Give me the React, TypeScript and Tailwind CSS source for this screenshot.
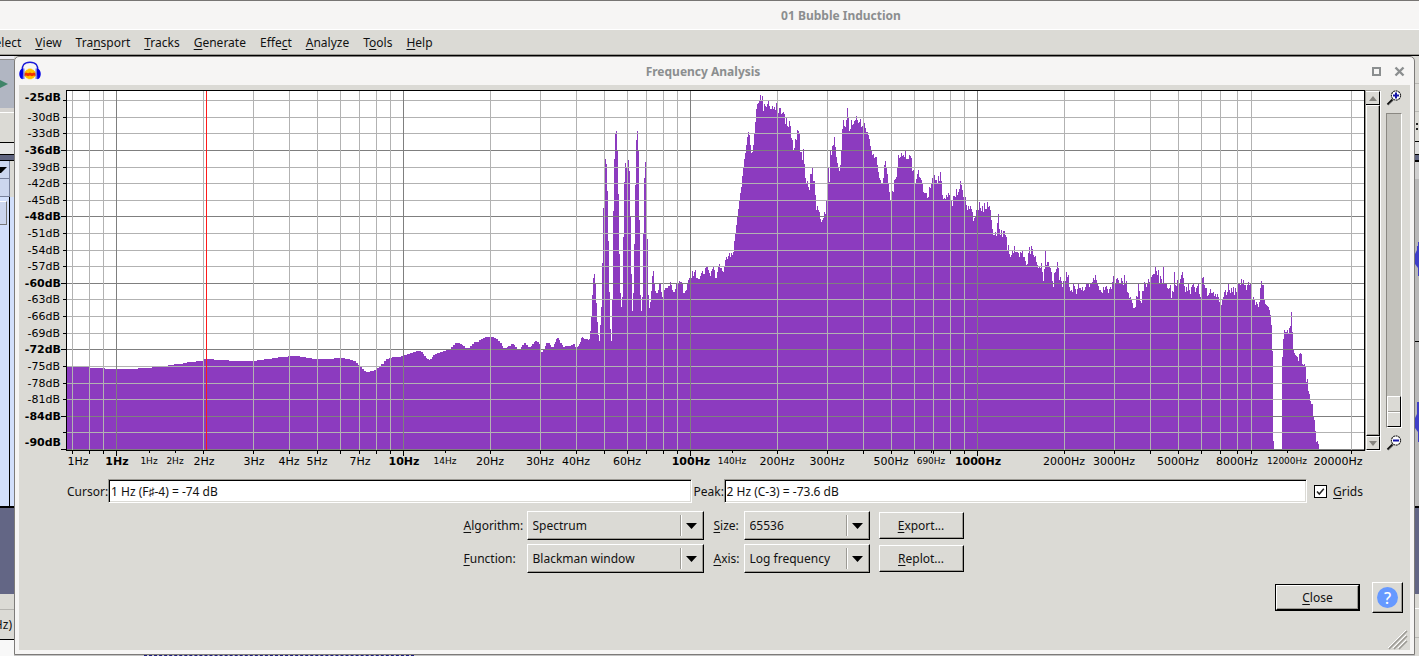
import React from "react";

type AxisLabel = { x: number; text: string; kind: "major" | "minor" | "small" };

const PLOT = { left: 66, top: 90, right: 1364, bottom: 450 };

const SPECTRUM = `67 367 89 368 105 369 138 368 152 367 160 366 168 365 174 364 183 363 187 362 196 361 204 359 214 360 229 361 257 360 264 359 272 358 278 357 288 356 300 357 306 358 312 359 334 358 345 359 350 360 353 361 356 363 358 365 360 367 362 369 364 371 366 372 370 371 374 370 377 368 379 366 381 364 384 361 386 359 389 358 392 357 401 356 404 355 407 354 410 353 413 352 416 351 421 352 423 354 424 356 426 358 427 359 429 360 430 359 432 357 433 355 435 354 437 353 440 352 443 351 446 350 448 349 451 347 453 345 455 343 460 344 462 345 463 346 465 348 470 346 472 344 474 342 479 340 481 339 483 338 485 337 494 338 496 339 498 341 500 343 502 346 503 348 507 347 508 346 511 344 514 345 515 347 517 349 521 347 522 345 524 343 526 345 528 347 531 346 532 344 534 342 535 341 537 342 539 344 540 348 541 352 543 350 545 346 546 343 550 345 551 347 554 344 555 342 556 339 557 338 559 340 560 343 562 345 563 347 565 346 571 345 573 344 575 347 577 347 578 346 579 344 580 342 581 338 582 337 583 338 584 339 588 340 589 339 590 331 591 317 592 295 593 278 594 274 595 283 596 303 597 322 598 335 599 341 600 325 601 307 602 263 603 208 605 159 606 164 607 191 608 241 609 292 610 329 611 341 612 299 613 211 614 159 615 134 616 131 617 150 618 194 619 254 620 293 621 307 622 297 623 237 624 182 625 163 626 168 628 160 629 171 630 217 631 274 632 311 633 293 634 244 635 185 636 140 637 131 638 150 639 220 640 295 641 311 642 297 643 234 644 178 645 162 647 239 648 295 649 308 650 302 651 291 652 276 653 271 654 283 655 291 656 293 658 290 659 284 661 292 662 297 664 290 665 288 668 286 670 282 671 285 672 290 673 292 675 289 676 283 679 281 680 282 682 283 683 293 685 291 686 290 687 283 688 280 689 278 692 271 693 276 694 272 695 270 696 278 698 279 700 276 701 273 702 271 703 274 705 268 706 266 708 270 709 273 710 276 711 271 712 269 713 266 714 270 715 278 717 272 718 267 719 264 720 268 722 271 723 272 724 267 725 260 726 257 727 259 728 256 729 253 730 257 731 253 732 255 733 252 734 241 735 233 736 225 737 217 738 209 739 201 740 193 741 187 742 176 743 168 744 159 745 153 746 145 747 137 748 132 749 135 750 145 751 153 752 152 753 145 754 134 755 122 756 109 757 104 758 103 759 101 760 95 761 101 762 96 763 111 764 104 765 106 766 107 767 104 768 101 769 106 770 109 772 106 773 109 774 107 775 110 776 103 778 113 779 108 781 114 782 113 783 112 784 114 785 124 786 118 787 126 788 127 789 121 790 126 791 138 792 140 793 150 794 148 795 139 796 140 797 130 798 131 799 134 800 152 802 160 803 149 804 164 805 178 806 184 807 181 808 187 809 190 810 174 812 168 813 181 815 195 816 210 817 206 818 210 819 212 820 219 821 222 822 220 823 218 824 212 825 214 826 201 827 180 828 168 829 182 830 151 831 155 832 146 833 145 834 137 835 147 836 157 837 163 838 168 839 171 840 165 841 151 842 129 843 120 844 126 845 127 846 120 847 108 848 118 849 131 850 129 851 120 852 125 853 124 854 121 855 120 856 116 857 120 858 123 859 122 860 119 861 127 862 126 864 123 865 128 866 132 868 135 869 139 870 146 871 151 872 155 873 154 874 158 875 157 877 165 878 172 879 178 880 180 881 183 883 178 884 165 885 161 886 168 887 174 888 184 889 192 890 200 891 195 892 191 893 192 894 180 895 179 896 177 897 168 898 155 899 158 900 157 901 153 902 156 903 155 904 157 905 151 906 159 909 155 910 156 911 158 912 171 913 170 914 183 916 179 917 174 918 170 919 177 920 178 921 180 922 184 923 192 924 193 927 198 928 197 929 187 930 188 931 184 932 178 934 175 935 180 937 183 938 176 939 181 940 172 941 181 942 195 943 199 944 198 945 199 946 195 947 197 948 193 949 195 950 200 952 206 953 196 955 197 956 189 957 195 958 192 959 189 960 181 961 185 962 190 963 197 966 205 967 210 968 206 969 209 970 206 971 209 972 212 973 221 974 218 975 217 976 210 979 202 980 208 981 211 982 206 983 212 984 203 985 209 987 202 988 207 989 206 990 210 991 220 992 229 993 235 995 232 996 236 997 223 998 214 999 229 1000 235 1001 230 1002 237 1003 231 1005 235 1006 237 1007 250 1008 245 1009 254 1010 257 1011 255 1012 251 1013 253 1014 246 1015 252 1018 253 1019 257 1020 252 1021 253 1022 251 1023 257 1025 261 1026 265 1027 264 1028 253 1029 247 1030 254 1031 246 1032 249 1033 255 1034 257 1035 256 1036 262 1037 265 1038 268 1039 267 1040 268 1041 263 1042 272 1043 281 1044 269 1045 251 1046 265 1047 262 1049 266 1050 268 1051 272 1052 281 1053 287 1054 273 1055 272 1056 269 1057 262 1058 268 1059 280 1060 277 1061 281 1062 287 1063 281 1066 272 1067 277 1068 275 1069 287 1070 291 1071 290 1072 292 1073 283 1074 286 1075 289 1076 294 1077 289 1078 283 1079 288 1081 290 1082 287 1083 291 1084 290 1085 287 1086 283 1089 287 1090 283 1092 282 1093 278 1094 280 1095 275 1096 280 1097 284 1098 286 1099 290 1101 292 1102 293 1103 287 1104 290 1105 287 1106 286 1107 289 1108 293 1109 289 1110 287 1111 289 1112 282 1113 276 1114 283 1116 279 1117 278 1118 280 1119 283 1121 278 1122 281 1123 285 1124 275 1125 283 1126 281 1127 292 1128 293 1129 298 1130 297 1131 299 1132 303 1133 308 1135 307 1136 296 1137 297 1138 284 1139 291 1140 301 1141 303 1142 291 1144 282 1145 284 1146 287 1147 283 1148 279 1149 282 1151 277 1152 275 1153 274 1155 267 1156 271 1157 275 1158 270 1159 283 1160 276 1161 279 1162 283 1163 267 1164 283 1167 288 1168 289 1169 288 1170 285 1171 298 1172 291 1173 292 1174 272 1175 285 1176 286 1177 280 1178 283 1180 279 1181 275 1182 272 1183 278 1184 286 1185 292 1186 287 1187 291 1188 284 1189 290 1190 294 1191 287 1192 285 1193 284 1194 287 1195 292 1196 288 1197 286 1198 284 1199 294 1200 297 1202 278 1203 277 1204 285 1205 288 1207 296 1208 295 1209 293 1210 289 1211 293 1213 292 1214 296 1215 294 1216 297 1217 294 1218 297 1219 302 1220 305 1222 299 1223 297 1224 292 1225 290 1226 295 1227 292 1228 284 1229 290 1230 293 1231 288 1232 292 1233 287 1234 295 1235 288 1236 292 1237 291 1238 284 1240 285 1241 279 1242 283 1243 280 1244 285 1246 290 1247 285 1248 282 1249 285 1250 283 1251 292 1252 299 1253 297 1254 300 1255 305 1256 302 1257 304 1258 307 1259 302 1260 288 1261 281 1262 285 1264 299 1265 304 1266 305 1267 306 1268 307 1269 310 1270 315 1271 325 1272 351 1273 441 1274 450 1282 357 1283 339 1284 330 1285 332 1287 330 1288 333 1289 328 1290 326 1291 312 1292 332 1293 350 1294 353 1295 355 1296 356 1297 357 1298 361 1299 354 1300 353 1301 354 1302 364 1303 365 1304 364 1305 367 1306 382 1307 379 1308 391 1309 394 1310 401 1311 404 1313 417 1314 420 1315 431 1316 442 1317 441 1318 444 1319 450`;

const spectrumPath = (() => {
  const n = SPECTRUM.split(/\s+/).map(Number);
  let d = `M${PLOT.left + 1} ${PLOT.bottom}`;
  for (let i = 0; i < n.length; i += 2) d += `H${n[i]}V${n[i + 1]}`;
  return d + "Z";
})();

const freqX = (hz: number) => Math.floor(116.9 + 287 * Math.log10(hz));

const gridFreqs: number[] = [];
[0.1, 1, 10, 100, 1000, 10000].forEach((decade) => {
  for (let k = 1; k < 10; k++) {
    const hz = k * decade;
    if (hz > 0.65 && hz <= 20000 && hz !== 10000) gridFreqs.push(hz);
  }
});

const isDecade = (hz: number) => [1, 10, 100, 1000].includes(hz);

const dbRows = Array.from({ length: 22 }, (_, i) => {
  const db = -27 - 3 * i;
  return { db, y: Math.floor(100.65 + i * 16.61), major: db % 12 === 0 || db === -90 };
});

const freqLabels: AxisLabel[] = [
  { x: 78, text: "1Hz", kind: "minor" },
  { x: 117, text: "1Hz", kind: "major" },
  { x: 149, text: "1Hz", kind: "small" },
  { x: 175, text: "2Hz", kind: "small" },
  { x: 204, text: "2Hz", kind: "minor" },
  { x: 254, text: "3Hz", kind: "minor" },
  { x: 289, text: "4Hz", kind: "minor" },
  { x: 317, text: "5Hz", kind: "minor" },
  { x: 360, text: "7Hz", kind: "minor" },
  { x: 404, text: "10Hz", kind: "major" },
  { x: 445, text: "14Hz", kind: "small" },
  { x: 490, text: "20Hz", kind: "minor" },
  { x: 540, text: "30Hz", kind: "minor" },
  { x: 576, text: "40Hz", kind: "minor" },
  { x: 627, text: "60Hz", kind: "minor" },
  { x: 691, text: "100Hz", kind: "major" },
  { x: 732, text: "140Hz", kind: "small" },
  { x: 777, text: "200Hz", kind: "minor" },
  { x: 827, text: "300Hz", kind: "minor" },
  { x: 891, text: "500Hz", kind: "minor" },
  { x: 931, text: "690Hz", kind: "small" },
  { x: 978, text: "1000Hz", kind: "major" },
  { x: 1064, text: "2000Hz", kind: "minor" },
  { x: 1114, text: "3000Hz", kind: "minor" },
  { x: 1178, text: "5000Hz", kind: "minor" },
  { x: 1237, text: "8000Hz", kind: "minor" },
  { x: 1287, text: "12000Hz", kind: "small" },
  { x: 1338, text: "20000Hz", kind: "minor" },
];

const labelClass = {
  major: "text-[11px] font-bold",
  minor: "text-[11px]",
  small: "text-[9px]",
};

function SpectrumChart() {
  const h = PLOT.bottom - PLOT.top;
  const w = PLOT.right - PLOT.left;
  return (
    <svg
      viewBox="19 85 1346 385"
      className="block h-auto min-w-0 flex-1 font-['DejaVu_Sans',sans-serif]"
      role="img"
      aria-label="Frequency spectrum"
    >
      <g shapeRendering="crispEdges">
        <rect x={PLOT.left} y={PLOT.top} width={w + 1} height={h + 1} fill="#000" />
        <rect x={PLOT.left + 1} y={PLOT.top + 1} width={w - 1} height={h - 1} fill="#fff" />
        <path d={spectrumPath} fill="#8c3bbf" />
        {dbRows.map((r) => (
          <g key={r.db}>
            <rect x={PLOT.left + 1} y={r.y} width={w - 1} height={1} fill={r.major ? "#7f7f7f" : "#b2b2b2"} />
            <rect x={r.major ? 61 : 63} y={r.y} width={r.major ? 5 : 3} height={1} fill="#000" />
          </g>
        ))}
        {gridFreqs.map((hz) => (
          <g key={hz}>
            <rect x={freqX(hz)} y={PLOT.top + 1} width={1} height={h - 1} fill={isDecade(hz) ? "#7f7f7f" : "#b2b2b2"} />
            <rect x={freqX(hz)} y={PLOT.bottom} width={1} height={isDecade(hz) ? 6 : 4} fill="#000" />
          </g>
        ))}
        {[149, 175, 445, 732, 931, 1287].map((x) => (
          <rect key={x} x={x} y={PLOT.bottom} width={1} height={3} fill="#000" />
        ))}
        <rect x={206} y={PLOT.top + 1} width={1} height={h - 1} fill="#ff1a1a" />
      </g>
      <text x={61} y={101} textAnchor="end" className={labelClass.major}>-25dB</text>
      {dbRows
        .filter((r) => r.db <= -30 && r.db > -87)
        .map((r) => (
          <text key={r.db} x={r.major ? 61 : 60} y={r.y + 4} textAnchor="end" className={r.major ? labelClass.major : labelClass.minor}>
            {r.db}dB
          </text>
        ))}
      <text x={61} y={446} textAnchor="end" className={labelClass.major}>-90dB</text>
      {freqLabels.map((l) => (
        <text key={l.x} x={l.x} y={l.kind === "small" ? 464 : 465} textAnchor="middle" className={labelClass[l.kind]}>
          {l.text}
        </text>
      ))}
    </svg>
  );
}

function Magnifier({ plus }: { plus?: boolean }) {
  return (
    <svg width="16" height="16" viewBox="0 0 16 16" aria-hidden="true">
      <path d="M1.5 14.5 L6.5 9.5" stroke="#111" strokeWidth="2" />
      <path d="M2.5 15 L7.5 10.5" stroke="#999" strokeWidth="1" />
      <circle cx="10" cy="5.5" r="4.6" fill="#fff" stroke="#222" strokeWidth="1.1" strokeDasharray="2 0.6" />
      <path d={plus ? "M7 5.5H13M10 2.5V8.5" : "M7 5.5H13"} stroke="#1414a8" strokeWidth="2" />
    </svg>
  );
}

function HeadphonesLogo() {
  return (
    <svg width="22" height="20" viewBox="0 0 22 20" aria-hidden="true">
      <path d="M3.2 10 C2.8 4.5 5 1.2 11 1.2 C17 1.2 19.2 4.5 18.8 10" fill="none" stroke="#1a1ad8" strokeWidth="1.4" />
      <path d="M5.5 11 L7 9.5 8 8.5 9 8.5 10 7.2 11 8 12 7.2 13 8.5 14 8.5 15 9.5 16.5 11 V15 L15 16.5 14 17.5 13 17.5 12 18.5 11 17.8 10 18.5 9 17.5 8 17.5 7 16.5 5.5 15Z" fill="#ffc400" />
      <path d="M5.5 12.5 L7 11.5 9 12.2 11 11.5 13 12.2 15 11.5 16.5 12.5 V15 L15 14.5 13 15.3 11 14.5 9 15.3 7 14.5 5.5 15Z" fill="#f43200" />
      <path d="M4.2 7.5 C-1 8 -1 17.5 3.8 18.2 Z" fill="#0000e8" />
      <path d="M17.8 7.5 C23 8 23 17.5 18.2 18.2 Z" fill="#0000e8" />
      <path d="M4.8 7.5 V18 M17.2 7.5 V18" stroke="#5a64d8" strokeWidth="1.2" />
    </svg>
  );
}

/* Caption whose mnemonic letter is underlined */
function Mnemonic({ text, at = 0 }: { text: string; at?: number }) {
  return (
    <>
      {text.slice(0, at)}
      <span className="underline decoration-1 underline-offset-2">{text[at]}</span>
      {text.slice(at + 1)}
    </>
  );
}

function Choice({ id, value }: { id: string; value: string }) {
  return (
    <div className="grid h-[29px] border border-t-white border-r-black border-b-black border-l-white shadow-[inset_-1px_-1px_0_#9c9a94]">
      <select id={id} defaultValue={value} className="col-start-1 row-start-1 w-full appearance-none bg-transparent pl-[5px] outline-none">
        <option>{value}</option>
      </select>
      <span className="pointer-events-none col-start-1 row-start-1 flex items-center justify-self-end">
        <span className="h-[21px] w-[2px] border-r border-l border-r-white border-l-[#9c9a94]" />
        <svg width="21" height="8" viewBox="0 0 21 8" aria-hidden="true">
          <path d="M4 1H15L9.5 7Z" fill="#000" />
        </svg>
      </span>
    </div>
  );
}

const buttonFrame =
  "border border-t-white border-r-black border-b-black border-l-white shadow-[inset_-1px_-1px_0_#9c9a94]";

const fieldFrame =
  "h-6 min-w-0 flex-1 border border-t-[#9c9a94] border-r-white border-b-white border-l-[#9c9a94] bg-white pl-[2px] shadow-[inset_1px_1px_0_#000,inset_-1px_-1px_0_#dbdad5] outline-none";

const menus: { text: string; at: number }[] = [
  { text: "Select", at: 0 },
  { text: "View", at: 0 },
  { text: "Transport", at: 3 },
  { text: "Tracks", at: 0 },
  { text: "Generate", at: 0 },
  { text: "Effect", at: 4 },
  { text: "Analyze", at: 0 },
  { text: "Tools", at: 1 },
  { text: "Help", at: 0 },
];

function LeftEdge() {
  return (
    <div className="flex flex-col overflow-hidden bg-[#dbdad5]">
      <div className="h-1 border-b border-[#8d8d8d] bg-[#ececf2]" />
      <div className="flex h-12 items-center bg-[#b1b6c2]">
        <svg width="8" height="8" viewBox="0 0 8 8" aria-hidden="true">
          <path d="M0 0L8 4L0 8Z" fill="#3f8468" />
        </svg>
      </div>
      <div className="h-[5px] border-b border-white bg-[#d5d3d0]" />
      <div className="h-[30px] border-b border-black" />
      <div className="h-[11px] bg-[#e6e6e6]" />
      <div className="h-[7px] border-t border-b border-black bg-[#5f6480]" />
      <div className="mr-[4px] flex h-[18px] items-center border-r border-b border-[#77809a] bg-[#ccd6ee]">
        <svg width="8" height="6" viewBox="0 0 8 6" aria-hidden="true">
          <path d="M0 0H7L1 6H0Z" fill="#000" />
        </svg>
      </div>
      <div className="mr-[4px] h-[18px] border-r border-b border-[#77809a] bg-[#ccd6ee]" />
      <div className="h-[311px] border-b-2 border-black bg-[#d2dffb]">
        <div className="mr-[4px] h-full border-r border-black pt-1">
          <div className="h-6 w-[7px] border-t border-r border-b border-t-white border-r-[#777] border-b-[#777] bg-[#ccd6ee]" />
        </div>
      </div>
      <div className="h-[86px] bg-[#636685]" />
      <div className="h-[16px] border-b border-[#b5b4b0]" />
      <div className="flex h-[30px] items-center justify-end border-b border-black pr-[2px]">Hz)</div>
      <div className="flex-1 bg-[#f8f8f8]" />
    </div>
  );
}

function RightEdge() {
  return (
    <div className="flex flex-col overflow-hidden bg-[#dbdad5]">
      <div className="h-[28px] border-b border-[#b9b8b4]" />
      <div className="h-[28px] border-b border-[#b9b8b4]" />
      <div className="flex h-[30px] flex-col items-center justify-center gap-[3px] border-b border-black">
        <span className="h-[2px] w-[2px] bg-[#222]" />
        <span className="h-[2px] w-[2px] bg-[#222]" />
      </div>
      <div className="h-[12px] bg-[#dcdcdc]" />
      <div className="h-[7px] border-t border-b border-black bg-[#5f6480]" />
      <div className="h-[18px] border-t border-black bg-[#d0d0d0]" />
      <div className="flex h-[163px] flex-col justify-end border-b border-black bg-[#b8b8b8] pb-[65px]">
        <svg width="4" height="34" viewBox="0 0 4 34" aria-hidden="true">
          <path d="M4 0V34L3 34V26L0 22V12L2 8V4H3V0Z" fill="#3f3fc8" />
        </svg>
      </div>
      <div className="flex h-[166px] flex-col justify-end border-b-2 border-black bg-[#b8b8b8] pb-[64px]">
        <svg width="4" height="40" viewBox="0 0 4 40" aria-hidden="true">
          <path d="M4 0V40H3V30L0 26V16L2 12V0Z" fill="#3f3fc8" />
        </svg>
      </div>
      <div className="h-[86px] bg-[#636685]" />
      <div className="h-[15px] border-b border-white" />
      <div className="h-[29px] border-b border-[#b9b8b4]" />
    </div>
  );
}

export default function App() {
  return (
    <div className="flex min-h-screen flex-col overflow-hidden bg-[#dbdad5] font-['Noto_Sans',sans-serif] text-[12px] leading-4 text-[#111]">
      <header className="flex h-[30px] items-center justify-center border-t border-b border-t-[#777573] border-b-white bg-[#f6f5f4] pt-[2px] pl-[263px] font-bold text-[#8b8e8f]">
        01 Bubble Induction
      </header>
      <nav className="flex h-[26px] items-center border-b border-black shadow-[inset_0_-1px_0_#9c9a94]">
        <div className="-ml-3 flex gap-[14px]">
          {menus.map((m) => (
            <button key={m.text} type="button">
              <Mnemonic text={m.text} at={m.at} />
            </button>
          ))}
        </div>
      </nav>

      <div className="grid flex-1 grid-cols-[14px_minmax(0,1fr)_4px]">
        <LeftEdge />
        <div className="flex flex-col">
          <section className="flex flex-1 flex-col rounded-t-[5px] border border-[#7d7b79] bg-[#f6f5f4] px-1 pb-1">
            <div className="flex h-7 items-center text-[#8b8e8f]">
              <HeadphonesLogo />
              <h1 className="flex-1 pt-[2px] text-center font-bold">Frequency Analysis</h1>
              <div className="flex w-[45px] items-center justify-end gap-[13px] pr-[5px]">
                <button type="button" aria-label="Maximize" className="h-[9px] w-[9px] border-2 border-[#8b8e8f]" />
                <button type="button" aria-label="Close window">
                  <svg width="11" height="11" viewBox="0 0 11 11" aria-hidden="true">
                    <path d="M1.5 1.5L9.5 9.5M9.5 1.5L1.5 9.5" stroke="#8b8e8f" strokeWidth="2.4" />
                  </svg>
                </button>
              </div>
            </div>

            <div className="flex flex-1 flex-col bg-[#dbdad5]">
              <div className="flex">
                <SpectrumChart />
                <div className="flex w-[45px] pt-[5px] pb-[19px]">
                  <div className="flex w-4 flex-col border border-t-[#9c9a94] border-r-white border-b-white border-l-[#9c9a94]">
                    <button type="button" aria-label="Scroll up" className="flex h-[14px] items-center justify-center border-t border-r border-b border-t-white border-r-black border-b-black">
                      <svg width="8" height="5" viewBox="0 0 8 5" aria-hidden="true">
                        <path d="M0 5L4 0L8 5Z" fill="#85837e" />
                      </svg>
                    </button>
                    <div className="flex-1 border-t border-r border-b border-l border-t-white border-r-black border-b-black border-l-white shadow-[inset_-1px_-1px_0_#9c9a94]" />
                    <button type="button" aria-label="Scroll down" className="flex h-[14px] items-center justify-center border-t border-r border-b border-l border-t-white border-r-black border-b-black border-l-white">
                      <svg width="8" height="5" viewBox="0 0 8 5" aria-hidden="true">
                        <path d="M0 0L4 5L8 0Z" fill="#85837e" />
                      </svg>
                    </button>
                  </div>
                  <div className="flex flex-1 flex-col items-center pr-[3px]">
                    <Magnifier plus />
                    <input
                      type="range"
                      aria-label="Vertical zoom"
                      min={0}
                      max={100}
                      defaultValue={0}
                      className="mt-[7px] mb-[7px] min-h-0 w-4 flex-1 appearance-none border border-t-[#8a8882] border-r-white border-b-white border-l-[#8a8882] bg-[#c3c2bc] [direction:rtl] [writing-mode:vertical-lr] [&::-webkit-slider-thumb]:h-[31px] [&::-webkit-slider-thumb]:w-[14px] [&::-webkit-slider-thumb]:appearance-none [&::-webkit-slider-thumb]:border [&::-webkit-slider-thumb]:border-t-white [&::-webkit-slider-thumb]:border-r-black [&::-webkit-slider-thumb]:border-b-black [&::-webkit-slider-thumb]:border-l-white [&::-webkit-slider-thumb]:bg-[linear-gradient(#dbdad5_14px,#9c9a94_14px,#9c9a94_15px,#fff_15px,#fff_16px,#dbdad5_16px)]"
                    />
                    <Magnifier />
                  </div>
                </div>
              </div>

              <div className="mt-[9px] flex items-center pr-[47px] pl-12">
                <label htmlFor="cursor" className="w-[41px] pt-[2px]">Cursor:</label>
                <input id="cursor" readOnly value="1 Hz (F♯-4) = -74 dB" className={fieldFrame} />
                <label htmlFor="peak" className="w-8 pt-[2px] pl-[2px]">Peak:</label>
                <input id="peak" readOnly value="2 Hz (C-3) = -73.6 dB" className={fieldFrame} />
                <label className="ml-[7px] flex items-center gap-[6px] pt-px">
                  <span className="grid">
                    <input
                      type="checkbox"
                      defaultChecked
                      className="peer col-start-1 row-start-1 h-[13px] w-[13px] appearance-none border border-black bg-white"
                    />
                    <svg width="13" height="13" viewBox="0 0 13 13" className="pointer-events-none invisible col-start-1 row-start-1 peer-checked:visible" aria-hidden="true">
                      <path d="M3 6.5L5.3 9L9.8 3.8" fill="none" stroke="#222" strokeWidth="1.5" />
                    </svg>
                  </span>
                  <span><Mnemonic text="Grids" /></span>
                </label>
              </div>

              <div className="mt-2 grid grid-cols-[63px_177px_10px_30px_126px_9px_85px] items-center justify-center gap-y-1 pr-[2px]">
                <label htmlFor="algorithm"><Mnemonic text="Algorithm:" /></label>
                <Choice id="algorithm" value="Spectrum" />
                <label htmlFor="size" className="col-start-4"><Mnemonic text="Size:" /></label>
                <Choice id="size" value="65536" />
                <button type="button" className={`col-start-7 h-[27px] ${buttonFrame}`}><Mnemonic text="Export..." /></button>
                <label htmlFor="function"><Mnemonic text="Function:" /></label>
                <Choice id="function" value="Blackman window" />
                <label htmlFor="axis" className="col-start-4"><Mnemonic text="Axis:" /></label>
                <Choice id="axis" value="Log frequency" />
                <button type="button" className={`col-start-7 h-[27px] ${buttonFrame}`}><Mnemonic text="Replot..." /></button>
              </div>

              <div className="mt-[9px] flex items-center justify-end gap-3 pr-[7px]">
                <div className="border border-black">
                  <button type="button" className={`block h-[25px] w-[83px] ${buttonFrame}`}><Mnemonic text="Close" /></button>
                </div>
                <button type="button" aria-label="Help" className={`flex h-[31px] w-[31px] items-center justify-center ${buttonFrame}`}>
                  <span className="flex h-[21px] w-[21px] items-center justify-center rounded-full bg-[#6699ff] text-[16px] font-medium text-white">?</span>
                </button>
              </div>

              <svg width="20" height="20" viewBox="0 0 20 20" className="mt-auto mr-[2px] self-end" aria-hidden="true">
                <path d="M1 19L19 1M6 19L19 6M11 19L19 11" stroke="#9c9a94" strokeWidth="1.6" />
                <path d="M0 18L18 0M5 18L18 5M10 18L18 10" stroke="#fff" strokeWidth="1" />
              </svg>
            </div>
          </section>
          <div className="h-px bg-[#c4c4c4]">
            <div className="ml-[130px] w-[270px] border-t border-dashed border-[#1a1a80]" />
          </div>
        </div>
        <RightEdge />
      </div>
    </div>
  );
}
